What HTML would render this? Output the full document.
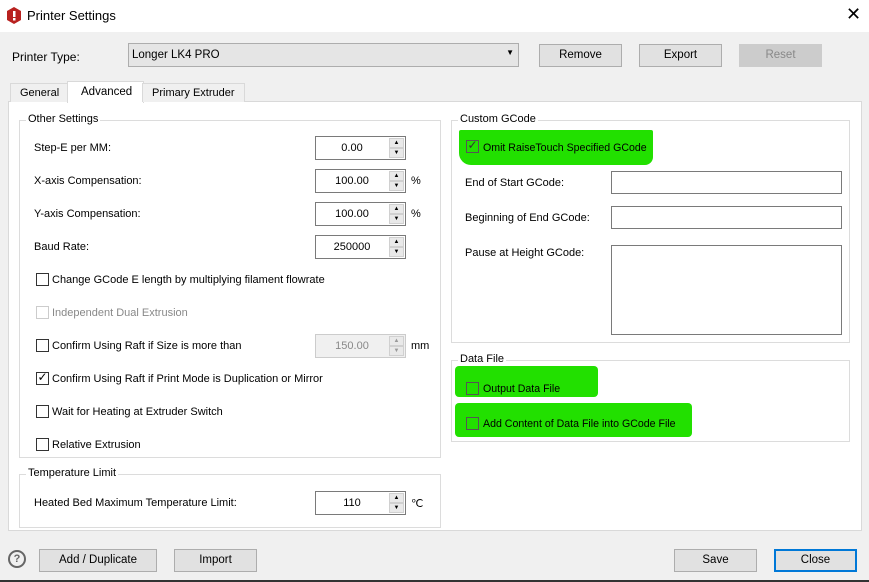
<!DOCTYPE html><html><head><style>
body{margin:0;width:869px;height:582px;background:#f0f0f0;font-family:"Liberation Sans",sans-serif;font-size:11px;color:#000;position:relative;overflow:hidden}
.a{position:absolute}
.t{position:absolute;white-space:nowrap}
.btn{position:absolute;background:#e1e1e1;border:1px solid #adadad;box-sizing:border-box;text-align:center;font-size:11.5px}
.grp{position:absolute;border:1px solid #dcdcdc;box-sizing:border-box}
.gl{position:absolute;top:-8px;left:6px;background:#fff;padding:0 2px;font-size:11px}
.spin{position:absolute;width:91px;height:24px;border:1px solid #7a7a7a;box-sizing:border-box;background:#fff}
.spin .v{position:absolute;left:0;width:72px;top:5px;text-align:center;font-size:11px}
.spin .b{position:absolute;right:1px;width:15px;height:10px;background:#e9e9e9;border:1px solid #d0d0d0;box-sizing:border-box;font-size:6px;text-align:center;line-height:8px}
.cb{position:absolute;width:13px;height:13px;border:1px solid #333;box-sizing:border-box;background:#fff}
.in{position:absolute;border:1px solid #7a7a7a;background:#fff;box-sizing:border-box}
.g{position:absolute;background:#22e000;border-radius:4px}
</style></head><body>
<div class="a" style="left:0;top:0;width:869px;height:32px;background:#fff"></div>
<svg class="a" style="left:6px;top:7px" width="16" height="18"><polygon points="8,0 15,4 15,13 8,17 1,13 1,4" fill="#b8211f"/><rect x="7" y="4" width="2.5" height="6" fill="#fff"/><rect x="7" y="11" width="2.5" height="2.5" fill="#fff"/></svg>
<div class="t" style="left:27px;top:8px;font-size:13px">Printer Settings</div>
<div class="t" style="left:846px;top:4px;font-size:18px">✕</div>
<div class="t" style="left:12px;top:50px;font-size:12px">Printer Type:</div>
<div class="a" style="left:128px;top:43px;width:391px;height:24px;background:#e5e5e5;border:1px solid #adadad;box-sizing:border-box"><span class="t" style="left:3px;top:5px;font-size:11.5px">Longer LK4 PRO</span><span class="t" style="right:4px;top:4px;font-size:8px">▼</span></div>
<div class="btn" style="left:539px;top:44px;width:83px;height:23px;line-height:21px">Remove</div>
<div class="btn" style="left:639px;top:44px;width:83px;height:23px;line-height:21px">Export</div>
<div class="btn" style="left:739px;top:44px;width:83px;height:23px;line-height:21px;color:#888;border-color:#ccc;background:#ccc">Reset</div>
<div class="a" style="left:8px;top:101px;width:854px;height:430px;background:#fff;border:1px solid #d9d9d9;box-sizing:border-box"></div>
<div class="a" style="left:10px;top:83px;width:58px;height:18px;background:#f0f0f0;border:1px solid #d9d9d9;border-bottom:none"><span class="t" style="left:9px;top:3px">General</span></div>
<div class="a" style="left:67px;top:81px;width:75px;height:21px;background:#fff;border:1px solid #d9d9d9;border-bottom:none"><span class="t" style="left:13px;top:4px;font-size:11.5px">Advanced</span></div>
<div class="a" style="left:142px;top:83px;width:101px;height:18px;background:#f0f0f0;border:1px solid #d9d9d9;border-bottom:none"><span class="t" style="left:9px;top:3px">Primary Extruder</span></div>

<div class="grp" style="left:19px;top:120px;width:422px;height:338px"><span class="gl">Other Settings</span></div>
<div class="t" style="left:34px;top:142px">Step-E per MM:</div>
<div class="t" style="left:34px;top:175px">X-axis Compensation:</div>
<div class="t" style="left:34px;top:208px">Y-axis Compensation:</div>
<div class="t" style="left:34px;top:241px">Baud Rate:</div>
<div class="spin" style="left:315px;top:136px"><span class="v">0.00</span><span class="b" style="top:1px">▲</span><span class="b" style="top:11px">▼</span></div>
<div class="spin" style="left:315px;top:169px"><span class="v">100.00</span><span class="b" style="top:1px">▲</span><span class="b" style="top:11px">▼</span></div>
<div class="spin" style="left:315px;top:202px"><span class="v">100.00</span><span class="b" style="top:1px">▲</span><span class="b" style="top:11px">▼</span></div>
<div class="spin" style="left:315px;top:235px"><span class="v">250000</span><span class="b" style="top:1px">▲</span><span class="b" style="top:11px">▼</span></div>
<div class="t" style="left:411px;top:175px">%</div><div class="t" style="left:411px;top:208px">%</div>
<div class="cb" style="left:36px;top:273px"></div><div class="t" style="left:52px;top:274px">Change GCode E length by multiplying filament flowrate</div>
<div class="cb" style="left:36px;top:306px;border-color:#ccc"></div><div class="t" style="left:52px;top:307px;color:#888">Independent Dual Extrusion</div>
<div class="cb" style="left:36px;top:339px"></div><div class="t" style="left:52px;top:340px">Confirm Using Raft if Size is more than</div>
<div class="spin" style="left:315px;top:334px;background:#f0f0f0;border-color:#ccc"><span class="v" style="color:#888">150.00</span><span class="b" style="top:1px;color:#999">▲</span><span class="b" style="top:11px;color:#999">▼</span></div>
<div class="t" style="left:411px;top:340px">mm</div>
<div class="cb" style="left:36px;top:372px"></div><div class="t" style="left:36px;top:370px;font-size:12px;width:13px;text-align:center">✓</div><div class="t" style="left:52px;top:373px">Confirm Using Raft if Print Mode is Duplication or Mirror</div>
<div class="cb" style="left:36px;top:405px"></div><div class="t" style="left:52px;top:406px">Wait for Heating at Extruder Switch</div>
<div class="cb" style="left:36px;top:438px"></div><div class="t" style="left:52px;top:439px">Relative Extrusion</div>

<div class="grp" style="left:19px;top:474px;width:422px;height:54px"><span class="gl">Temperature Limit</span></div>
<div class="t" style="left:34px;top:497px">Heated Bed Maximum Temperature Limit:</div>
<div class="spin" style="left:315px;top:491px"><span class="v">110</span><span class="b" style="top:1px">▲</span><span class="b" style="top:11px">▼</span></div>
<div class="t" style="left:411px;top:497px">℃</div>

<div class="grp" style="left:451px;top:120px;width:399px;height:223px"><span class="gl">Custom GCode</span></div>
<div class="g" style="left:459px;top:130px;width:194px;height:35px;border-radius:2px 2px 8px 12px"></div>
<div class="cb" style="left:466px;top:140px;border-color:#555;background:transparent"></div><div class="t" style="left:466px;top:138px;font-size:12px;width:13px;text-align:center;color:#333">✓</div>
<div class="t" style="left:483px;top:142px;font-size:10.6px">Omit RaiseTouch Specified GCode</div>
<div class="t" style="left:465px;top:177px">End of Start GCode:</div>
<div class="t" style="left:465px;top:212px">Beginning of End GCode:</div>
<div class="t" style="left:465px;top:247px">Pause at Height GCode:</div>
<div class="in" style="left:611px;top:171px;width:231px;height:23px"></div>
<div class="in" style="left:611px;top:206px;width:231px;height:23px"></div>
<div class="in" style="left:611px;top:245px;width:231px;height:90px"></div>

<div class="grp" style="left:451px;top:360px;width:399px;height:82px"><span class="gl">Data File</span></div>
<div class="g" style="left:455px;top:366px;width:143px;height:31px"></div>
<div class="g" style="left:455px;top:403px;width:237px;height:34px"></div>
<div class="cb" style="left:466px;top:382px;border-color:#555;background:transparent"></div><div class="t" style="left:483px;top:383px;font-size:10.6px">Output Data File</div>
<div class="cb" style="left:466px;top:417px;border-color:#555;background:transparent"></div><div class="t" style="left:483px;top:418px;font-size:10.6px">Add Content of Data File into GCode File</div>

<div class="a" style="left:8px;top:550px;width:18px;height:18px;border:2px solid #666;border-radius:50%;box-sizing:border-box;text-align:center;font-size:11px;font-weight:bold;color:#666;line-height:14px">?</div>
<div class="btn" style="left:39px;top:549px;width:118px;height:23px;line-height:21px">Add / Duplicate</div>
<div class="btn" style="left:174px;top:549px;width:83px;height:23px;line-height:21px">Import</div>
<div class="btn" style="left:674px;top:549px;width:83px;height:23px;line-height:21px">Save</div>
<div class="btn" style="left:774px;top:549px;width:83px;height:23px;line-height:19px;border:2px solid #0078d7">Close</div>
<div class="a" style="left:0;top:580px;width:869px;height:2px;background:#333"></div>
</body></html>
